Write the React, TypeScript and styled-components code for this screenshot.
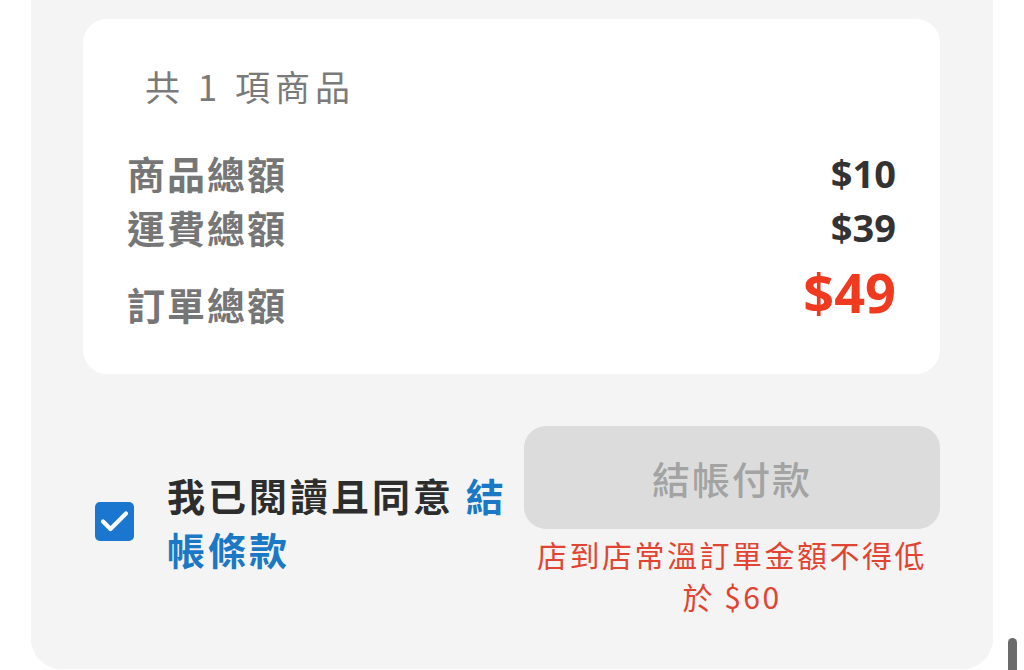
import React from "react";
import styled, { createGlobalStyle } from "styled-components";

const CJK = `"Noto Sans CJK TC", "Noto Sans", sans-serif`;
const NUM = `"Open Sans", "Noto Sans CJK TC", sans-serif`;

const GlobalStyle = createGlobalStyle`
  html, body { margin: 0; padding: 0; background: #ffffff; }
  body { font-family: ${CJK}; }
  * { box-sizing: border-box; }
`;

const Panel = styled.main`
  margin: 0 31px;
  padding: 19px 53px 52px 52px;
  background: #f4f4f4;
  border-radius: 0 0 30px 30px;
  display: flex;
  flex-direction: column;
`;

const Card = styled.section`
  background: #ffffff;
  border-radius: 24px;
  padding: 38px 44px 43px;
  display: flex;
  flex-direction: column;
`;

const Count = styled.div`
  font-family: ${CJK};
  font-size: 35px;
  line-height: 58px;
  font-weight: 400;
  color: #7a7a7a;
  letter-spacing: 5px;
  padding-left: 18px;
  margin-bottom: 31px;
`;

const Row = styled.div<{ $total?: boolean }>`
  display: flex;
  justify-content: space-between;
  align-items: ${(p) => (p.$total ? "flex-end" : "center")};
`;

const Label = styled.span`
  font-family: ${CJK};
  font-weight: 700;
  font-size: 38px;
  line-height: 54px;
  color: #767676;
  letter-spacing: 2px;
`;

const Amount = styled.span<{ $total?: boolean }>`
  font-family: ${NUM};
  font-weight: 700;
  font-size: ${(p) => (p.$total ? "54px" : "38px")};
  line-height: ${(p) => (p.$total ? "77px" : "54px")};
  color: ${(p) => (p.$total ? "#f03a1f" : "#333333")};
`;

const Footer = styled.div`
  display: flex;
  align-items: center;
  gap: 16px;
  margin-top: 52px;
  padding-left: 12px;
`;

const Agree = styled.label`
  flex: 1;
  display: flex;
  align-items: center;
  gap: 33px;
`;

const Box = styled.span`
  width: 39px;
  height: 39px;
  border-radius: 5px;
  background: #1a76cf;
  display: flex;
  flex-shrink: 0;
`;

const AgreeText = styled.span`
  font-family: ${CJK};
  font-weight: 700;
  font-size: 38px;
  line-height: 54px;
  color: #2d2d2d;
  letter-spacing: 3px;
`;

const TermsLink = styled.a`
  color: #1a78c4;
  text-decoration: none;
`;

const Checkout = styled.div`
  width: 416px;
  flex-shrink: 0;
  display: flex;
  flex-direction: column;
`;

const PayButton = styled.button`
  height: 103px;
  border: none;
  border-radius: 22px;
  background: #dcdcdc;
  color: #a3a3a3;
  font-family: ${CJK};
  font-size: 38px;
  font-weight: 500;
  letter-spacing: 2px;
  padding: 0;
`;

const Notice = styled.p`
  margin: 4px 0 0;
  text-align: center;
  color: #e24432;
  font-family: ${CJK};
  font-size: 30px;
  line-height: 42px;
  letter-spacing: 2.5px;
`;

const ScrollThumb = styled.div`
  position: fixed;
  right: 7px;
  bottom: 0;
  width: 9px;
  height: 32px;
  border-radius: 5px 5px 0 0;
  background: #6b6b6b;
`;

export default function App() {
  return (
    <>
      <GlobalStyle />
      <Panel>
        <Card>
          <Count>共 1 項商品</Count>
          <Row>
            <Label>商品總額</Label>
            <Amount>$10</Amount>
          </Row>
          <Row>
            <Label>運費總額</Label>
            <Amount>$39</Amount>
          </Row>
          <Row $total>
            <Label>訂單總額</Label>
            <Amount $total>$49</Amount>
          </Row>
        </Card>
        <Footer>
          <Agree>
            <Box>
              <svg width="39" height="39" viewBox="0 0 39 39" fill="none">
                <polyline
                  points="8 19.5 15.5 27 31 11.5"
                  stroke="#ffffff"
                  strokeWidth="4.2"
                  strokeLinecap="round"
                  strokeLinejoin="round"
                />
              </svg>
            </Box>
            <AgreeText>
              我已閱讀且同意 <TermsLink href="#">結帳條款</TermsLink>
            </AgreeText>
          </Agree>
          <Checkout>
            <PayButton disabled>結帳付款</PayButton>
            <Notice>店到店常溫訂單金額不得低於 $60</Notice>
          </Checkout>
        </Footer>
      </Panel>
      <ScrollThumb />
    </>
  );
}
